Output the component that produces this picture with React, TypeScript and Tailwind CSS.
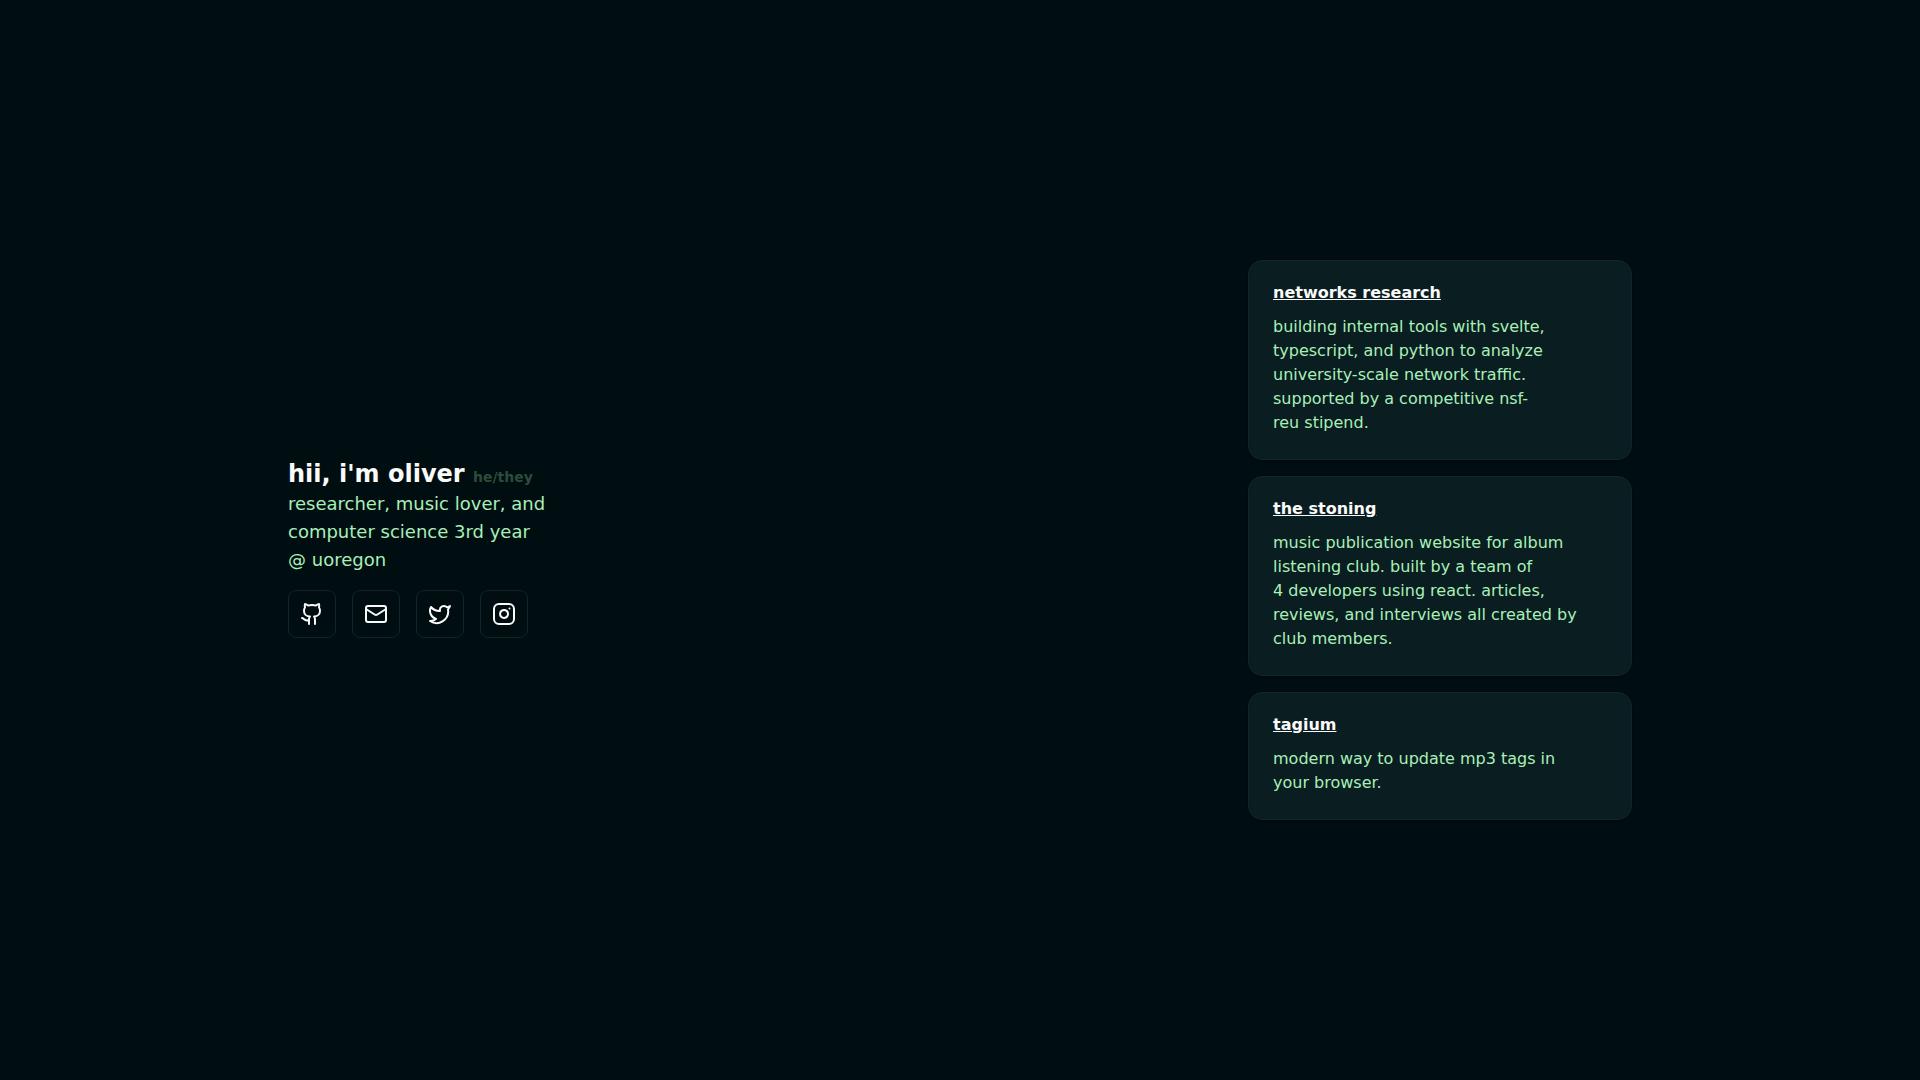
import { Github, Instagram, Mail, Twitter } from 'lucide-react';

const LINKS = [
  { label: 'github',    href: '#github',    Icon: Github },
  { label: 'email',     href: '#email',     Icon: Mail },
  { label: 'twitter',   href: '#twitter',   Icon: Twitter },
  { label: 'instagram', href: '#instagram', Icon: Instagram },
];

// \u00a0 keeps short words from being left alone at the end of a line
const PROJECTS = [
  {
    title: 'networks research',
    href: '#networks-research',
    description:
      'building internal tools with svelte, typescript, and python to analyze university-scale network traffic. supported by a competitive nsf-reu\u00a0stipend.',
  },
  {
    title: 'the stoning',
    href: '#the-stoning',
    description:
      'music publication website for album listening club. built by a team of 4\u00a0developers using react. articles, reviews, and interviews all created by club members.',
  },
  {
    title: 'tagium',
    href: '#tagium',
    description: 'modern way to update mp3 tags in your\u00a0browser.',
  },
];

function ProjectCard({ project }: { project: (typeof PROJECTS)[number] }) {
  return (
    <article className="flex flex-col gap-3.5 rounded-[14px] border border-[#10252a] bg-[#0a1d20] p-6 shadow-sm">
      <h2 className="font-bold leading-none text-neutral-50">
        <a href={project.href} className="underline">{project.title}</a>
      </h2>
      <p>{project.description}</p>
    </article>
  );
}

export default function App() {
  return (
    <main className="flex min-h-screen items-center justify-between bg-[#000d11] px-[15%] font-['DejaVu_Sans',sans-serif] text-[#a8f0b8]">
      {/* Intro */}
      <section className="max-w-xs pt-4">
        <h1 className="text-2xl font-bold text-neutral-50">
          hii, i'm oliver <span className="text-sm text-[#2c4c3a]">he/they</span>
        </h1>
        <p className="text-lg">
          researcher, music lover, and computer science 3rd year @{'\u00a0'}uoregon
        </p>
        <nav className="mt-4 flex gap-4">
          {LINKS.map(({ label, href, Icon }) => (
            <a
              key={label}
              href={href}
              aria-label={label}
              className="flex size-12 items-center justify-center rounded-lg border border-[#10252a] text-neutral-50 hover:bg-[#0a1d20]"
            >
              <Icon className="size-6" />
            </a>
          ))}
        </nav>
      </section>

      {/* Projects */}
      <section className="flex w-full max-w-sm flex-col gap-4">
        {PROJECTS.map((project) => (
          <ProjectCard key={project.title} project={project} />
        ))}
      </section>
    </main>
  );
}
